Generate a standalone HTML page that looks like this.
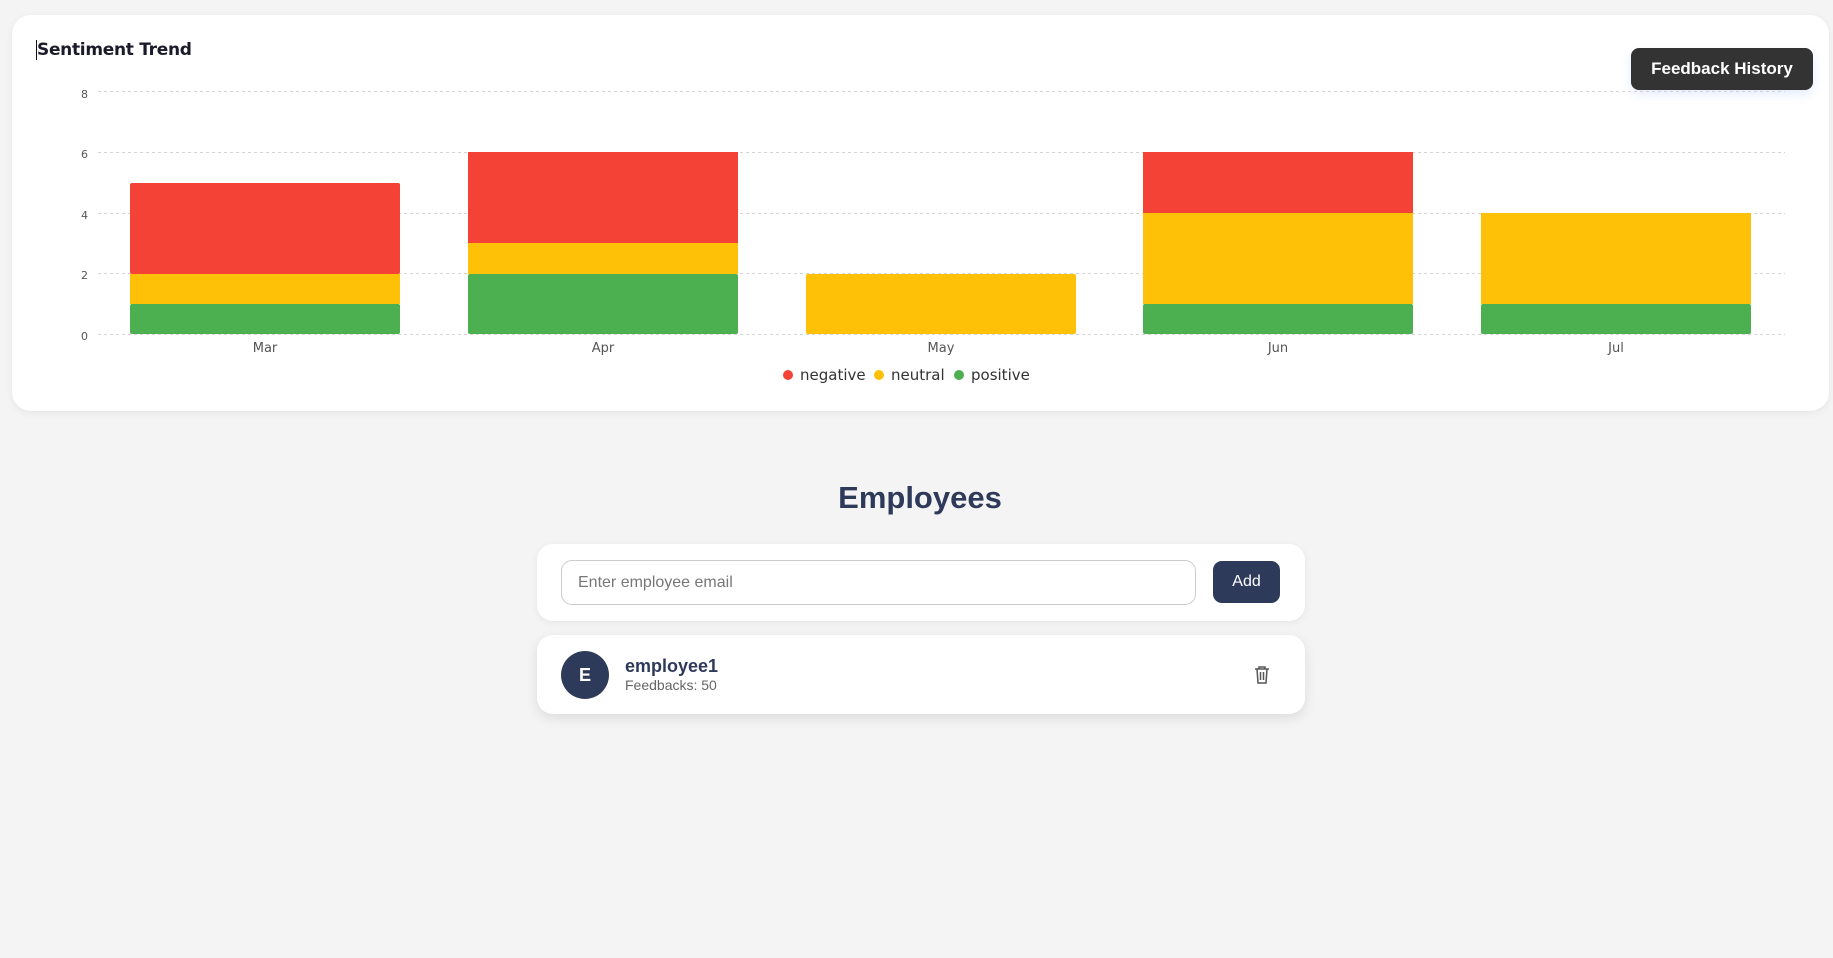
<!DOCTYPE html>
<html><head><meta charset="utf-8"><style>
*{box-sizing:border-box;margin:0;padding:0}
body{width:1833px;height:958px;background:#f4f4f4;font-family:"Liberation Sans",sans-serif;position:relative;overflow:hidden}
.card{position:absolute;background:#fff;border-radius:19px;box-shadow:0 2px 8px rgba(0,0,0,0.06)}
.btn{position:absolute;left:1631px;top:48px;width:182px;height:42px;background:#333;color:#fff;border-radius:8px;font-weight:bold;font-size:17px;display:flex;align-items:center;justify-content:center;box-shadow:0 4px 10px rgba(80,120,255,0.15)}
</style></head><body>
<div class="card" style="left:12px;top:15px;width:1817px;height:396px"></div>
<div style="position:absolute;left:36px;top:40px;font-family:'DejaVu Sans',sans-serif;font-weight:bold;font-size:17px;letter-spacing:-0.3px;color:#1a1a2a;border-left:1px solid #111">Sentiment Trend</div>
<div class="btn">Feedback History</div>
<svg style="position:absolute;left:0;top:0" width="1833" height="420" font-family="DejaVu Sans, sans-serif">
<g stroke="#d4d4d4" stroke-dasharray="3 3" stroke-width="1">
<line x1="98" x2="1785" y1="91.5" y2="91.5"/><line x1="98" x2="1785" y1="152.5" y2="152.5"/><line x1="98" x2="1785" y1="213.5" y2="213.5"/><line x1="98" x2="1785" y1="273.5" y2="273.5"/><line x1="98" x2="1785" y1="334.5" y2="334.5"/>
</g>
<g font-size="11" fill="#555" text-anchor="end">
<text x="88" y="98">8</text><text x="88" y="158">6</text><text x="88" y="219">4</text><text x="88" y="279">2</text><text x="88" y="340">0</text>
</g>
<g>
<rect x="130" y="183" width="270" height="91" fill="#f44336" rx="2"/><rect x="130" y="274" width="270" height="30" fill="#ffc107"/><rect x="130" y="304" width="270" height="30" fill="#4caf50" rx="2"/>
<rect x="468" y="152" width="270" height="91" fill="#f44336"/><rect x="468" y="243" width="270" height="31" fill="#ffc107"/><rect x="468" y="274" width="270" height="60" fill="#4caf50" rx="2"/>
<rect x="806" y="274" width="270" height="60" fill="#ffc107" rx="2"/>
<rect x="1143" y="152" width="270" height="61" fill="#f44336"/><rect x="1143" y="213" width="270" height="91" fill="#ffc107"/><rect x="1143" y="304" width="270" height="30" fill="#4caf50" rx="2"/>
<rect x="1481" y="213" width="270" height="91" fill="#ffc107"/><rect x="1481" y="304" width="270" height="30" fill="#4caf50" rx="2"/>
</g>
<g font-size="13" fill="#555" text-anchor="middle">
<text x="265" y="352">Mar</text><text x="603" y="352">Apr</text><text x="941" y="352">May</text><text x="1278" y="352">Jun</text><text x="1616" y="352">Jul</text>
</g>
<g font-size="15" fill="#333">
<circle cx="788" cy="375" r="5" fill="#f44336"/><text x="800" y="380">negative</text>
<circle cx="879" cy="375" r="5" fill="#ffc107"/><text x="891" y="380">neutral</text>
<circle cx="959" cy="375" r="5" fill="#4caf50"/><text x="971" y="380">positive</text>
</g>
</svg>
<div style="position:absolute;left:0;width:1840px;top:480px;text-align:center;font-size:31px;font-weight:bold;color:#2d3a5a">Employees</div>
<div class="card" style="left:537px;top:544px;width:768px;height:77px;border-radius:16px"></div>
<div style="position:absolute;left:561px;top:560px;width:635px;height:45px;border:1px solid #ccc;border-radius:11px;font-size:16px;color:#777;padding:13px 16px">Enter employee email</div>
<div style="position:absolute;left:1213px;top:561px;width:67px;height:42px;background:#2d3a5a;color:#fff;border-radius:9px;font-size:16px;display:flex;align-items:center;justify-content:center">Add</div>
<div class="card" style="left:537px;top:635px;width:768px;height:79px;border-radius:16px;box-shadow:0 4px 12px rgba(0,0,0,0.1)"></div>
<div style="position:absolute;left:561px;top:651px;width:48px;height:48px;border-radius:50%;background:#2d3a5a;color:#fff;font-weight:bold;font-size:18px;display:flex;align-items:center;justify-content:center">E</div>
<div style="position:absolute;left:625px;top:656px;font-size:18px;font-weight:bold;color:#2d3a5a">employee1</div>
<div style="position:absolute;left:625px;top:677px;font-size:14px;color:#666">Feedbacks: 50</div>
<svg style="position:absolute;left:1253px;top:665px" width="18" height="20" viewBox="0 0 18 20" fill="none" stroke="#555" stroke-width="1.5"><path d="M2 4h14M6 4V2h6v2M4 4l1 14h8l1-14M7.5 7v8M10.5 7v8"/></svg>
</body></html>
